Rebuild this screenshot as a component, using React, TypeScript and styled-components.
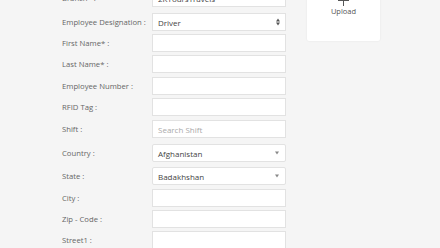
import React from "react";
import styled, { createGlobalStyle } from "styled-components";

const Global = createGlobalStyle`
  html, body { margin: 0; padding: 0; background: #f5f5f5; overflow: hidden; }
  body { font-family: "Open Sans", "Liberation Sans", sans-serif; }
`;

const Page = styled.div`
  display: flex;
  align-items: flex-start;
  padding-left: 62px;
  margin-top: -11px;
  width: 440px;
  height: 260px;
  box-sizing: border-box;
  overflow: hidden;
`;

const Form = styled.div`
  display: flex;
  flex-direction: column;
  width: 224px;
`;

const Row = styled.div<{ $h: number; $gap: number }>`
  display: flex;
  align-items: center;
  height: ${(p) => p.$h}px;
  margin-bottom: ${(p) => p.$gap}px;
`;

const Label = styled.div`
  width: 90px;
  font-size: 7.7px;
  color: #666;
  white-space: nowrap;
`;

const Field = styled.div<{ $rounded?: boolean }>`
  position: relative;
  flex: none;
  width: 134px;
  height: 100%;
  box-sizing: border-box;
  background: #fff;
  border: 1px solid #e2e2e2;
  border-radius: ${(p) => (p.$rounded ? 2 : 0)}px;
  display: flex;
  align-items: center;
  padding: 0 5px;
  font-size: 8px;
  color: #444;
`;

const Placeholder = styled.span`
  color: #aaa;
`;

const Caret = styled.span`
  position: absolute;
  right: 6px;
  top: 50%;
  transform: translateY(-50%);
  width: 0;
  height: 0;
  border-left: 2.5px solid transparent;
  border-right: 2.5px solid transparent;
  border-top: 3px solid #888;
`;

const UpDown = styled.span`
  position: absolute;
  right: 5px;
  top: 50%;
  transform: translateY(-50%);
  display: flex;
  flex-direction: column;
  gap: 1px;
  &::before, &::after {
    content: "";
    width: 0;
    height: 0;
    border-left: 2.5px solid transparent;
    border-right: 2.5px solid transparent;
  }
  &::before { border-bottom: 3px solid #555; }
  &::after { border-top: 3px solid #555; }
`;

const Upload = styled.div`
  margin-left: 21px;
  width: 73px;
  height: 52px;
  background: #fff;
  border-radius: 2px;
  box-shadow: 0 0 2px rgba(0, 0, 0, 0.08);
  display: flex;
  flex-direction: column;
  align-items: center;
  padding-top: 6px;
  box-sizing: border-box;
  color: #555;
`;

const Plus = styled.div`
  position: relative;
  width: 11px;
  height: 11px;
  &::before, &::after {
    content: "";
    position: absolute;
    background: #555;
  }
  &::before { left: 0; right: 0; top: 4.5px; height: 1.5px; }
  &::after { top: 0; bottom: 0; left: 4.5px; width: 1.5px; }
`;

const UploadText = styled.div`
  font-size: 7.5px;
  margin-top: 0;
  line-height: 10px;
`;

type F = {
  label: string;
  h: number;
  gap: number;
  kind?: "caret" | "updown";
  value?: string;
  placeholder?: string;
  rounded?: boolean;
};

const fields: F[] = [
  { label: "Branch* :", h: 18, gap: 6, kind: "caret", value: "2KToursTravels" },
  { label: "Employee Designation :", h: 18, gap: 3, kind: "updown", value: "Driver" },
  { label: "First Name* :", h: 18, gap: 3 },
  { label: "Last Name* :", h: 18, gap: 4 },
  { label: "Employee Number :", h: 18, gap: 3 },
  { label: "RFID Tag :", h: 18, gap: 4 },
  { label: "Shift :", h: 18, gap: 6, placeholder: "Search Shift" },
  { label: "Country :", h: 18, gap: 5, kind: "caret", value: "Afghanistan", rounded: true },
  { label: "State :", h: 18, gap: 4, kind: "caret", value: "Badakhshan", rounded: true },
  { label: "City :", h: 18, gap: 3 },
  { label: "Zip - Code :", h: 18, gap: 3 },
  { label: "Street1 :", h: 18, gap: 3 },
];

export default function App() {
  return (
    <>
      <Global />
      <Page>
        <Form>
          {fields.map((f, i) => (
            <Row key={i} $h={f.h} $gap={f.gap}>
              <Label>{f.label}</Label>
              <Field $rounded={f.rounded}>
                {f.value}
                {f.placeholder && <Placeholder>{f.placeholder}</Placeholder>}
                {f.kind === "caret" && <Caret />}
                {f.kind === "updown" && <UpDown />}
              </Field>
            </Row>
          ))}
        </Form>
        <Upload>
          <Plus />
          <UploadText>Upload</UploadText>
        </Upload>
      </Page>
    </>
  );
}
